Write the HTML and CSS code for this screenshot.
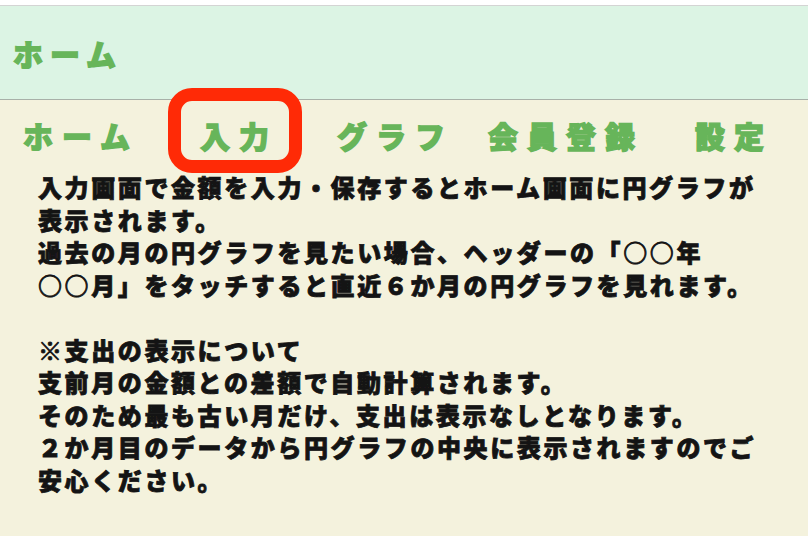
FILE: index.html
```html
<!DOCTYPE html>
<html lang="ja">
<head>
    <meta charset="UTF-8">
    <meta name="viewport" content="width=device-width, initial-scale=1.0">
    <title>ホーム</title>
    <link rel="stylesheet" href="styles.css">
</head>
<body>
    <div class="topbar"></div>
    <header class="header">
        <h1 class="title">ホーム</h1>
    </header>

    <nav class="nav">
        <span class="nav-item">ホーム</span>
        <span class="nav-item marked">入力</span>
        <span class="nav-item">グラフ</span>
        <span class="nav-item">会員登録</span>
        <span class="nav-item">設定</span>
    </nav>

    <div class="content">
        <p>入力画面で金額を入力・保存するとホーム画面に円グラフが<br>
        表示されます。<br>
        過去の月の円グラフを見たい場合、ヘッダーの「○○年<br>
        ○○月」をタッチすると直近６か月の円グラフを見れます。</p>

        <p class="note">※支出の表示について<br>
        支前月の金額との差額で自動計算されます。<br>
        そのため最も古い月だけ、支出は表示なしとなります。<br>
        ２か月目のデータから円グラフの中央に表示されますのでご<br>
        安心ください。</p>
    </div>
</body>
</html>
```

FILE: styles.css
```css
body {
    margin: 0;
    background-color: #f4f2dd;
    font-family: "Noto Sans CJK JP", "Noto Sans", sans-serif;
    color: #141414;
}
.topbar {
    height: 5px;
    background-color: #fff;
    border-bottom: 1px solid #d4d4d4;
}
.header {
    height: 93px;
    background-color: #dcf4e4;
    border-bottom: 1px solid #a8b0a8;
    display: flex;
    align-items: center;
    padding-left: 13px;
}
.title {
    margin: 0;
    font-size: 30px;
    font-weight: 900;
    letter-spacing: 7px;
    line-height: 40px;
    color: #67b55a;
    -webkit-text-stroke: 1.3px #67b55a;
}
.nav {
    display: grid;
    grid-template-columns: 177px 137px 151px 207px auto;
    padding: 15px 0 0 23px;
}
.nav-item {
    font-size: 30px;
    font-weight: 900;
    letter-spacing: 9px;
    line-height: 40px;
    color: #67b55a;
    -webkit-text-stroke: 1.3px #67b55a;
    white-space: nowrap;
}
.marked {
    position: relative;
    justify-self: start;
}
.marked::after {
    content: "";
    position: absolute;
    top: -27px;
    bottom: -18px;
    left: -32px;
    right: -24px;
    border: 13px solid #ff2a06;
    border-radius: 24px;
}
.content {
    padding: 16px 0 0 38px;
}
.content p {
    margin: 0;
    font-size: 24px;
    font-weight: 900;
    letter-spacing: 2.6px;
    line-height: 32.5px;
    white-space: nowrap;
    -webkit-text-stroke: 0.8px #141414;
}
.content .note {
    margin-top: 32.5px;
}
```
